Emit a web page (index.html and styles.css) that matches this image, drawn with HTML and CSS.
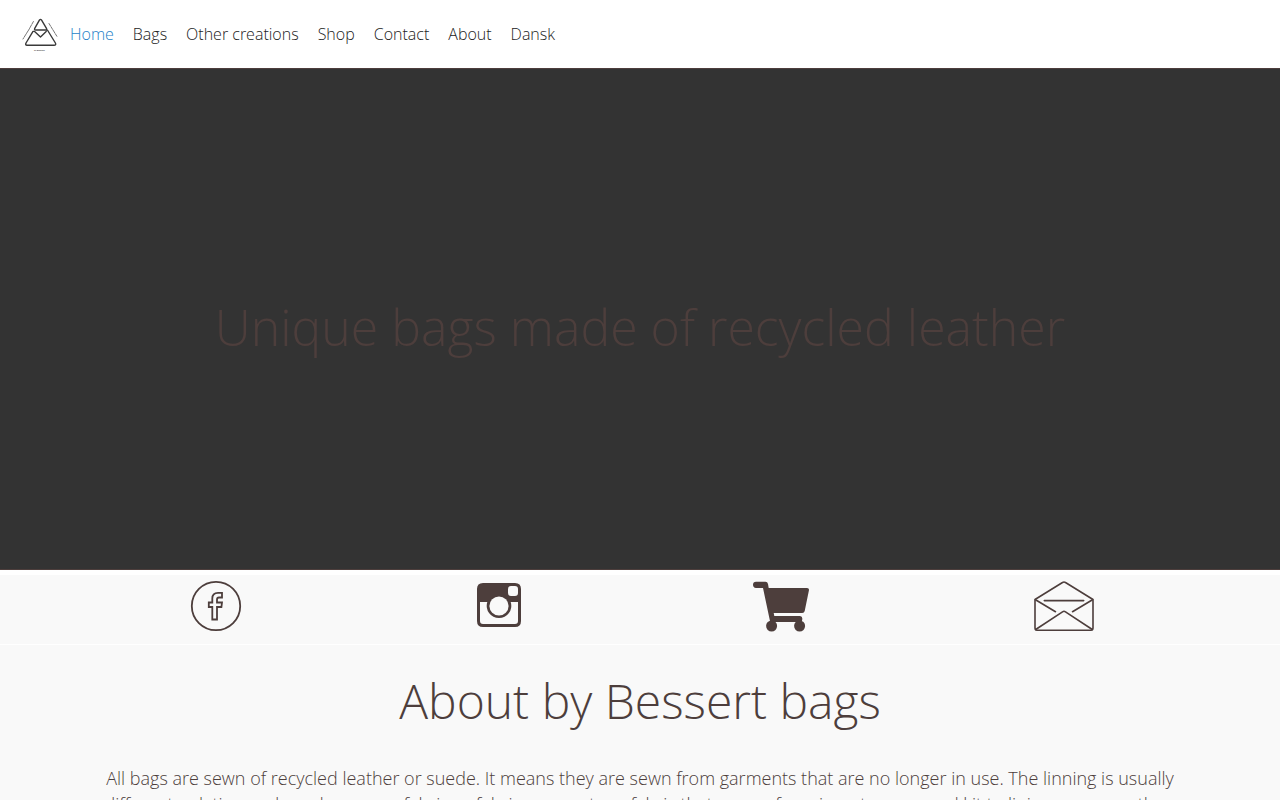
FILE: index.html
```html
<!DOCTYPE html>
<html lang="en">
<head>
    <meta charset="UTF-8">
    <meta name="viewport" content="width=device-width, initial-scale=1.0">
    <title>by Bessert</title>
    <link rel="stylesheet" href="styles.css">
</head>
<body>
    <header class="navbar">
        <a class="logo" href="#" aria-label="by Bessert">
            <svg viewBox="0 0 50 46" width="50" height="46" fill="none" stroke="#3a3a3a" stroke-width="1.4" stroke-linejoin="round" stroke-linecap="round">
                <path d="M23.4 8.2Q24.5 6.5 25.6 8.2L30.6 16.6M18.6 16.6L23.4 8.2M18.6 16.6Q18.2 18 19.6 18H31.4L39.4 31Q40.5 33.2 38 33.2H11Q9 33.2 10 31L17 19.4H18.6L24.5 25L30.2 19.6"/>
                <g stroke="#777" stroke-width="1" stroke-dasharray="3 1">
                    <path d="M17.4 9.5L12.4 18.5M12 19L7 27"/>
                    <path d="M33 11.5L41 24.5"/>
                </g>
                <text class="logo-text" x="18" y="39">by BESSERT</text>
            </svg>
        </a>
        <nav>
            <ul class="menu">
                <li><a class="active" href="#">Home</a></li>
                <li><a href="#">Bags</a></li>
                <li><a href="#">Other creations</a></li>
                <li><a href="#">Shop</a></li>
                <li><a href="#">Contact</a></li>
                <li><a href="#">About</a></li>
                <li><a href="#">Dansk</a></li>
            </ul>
        </nav>
    </header>

    <section class="hero">
        <h1>Unique bags made of recycled leather</h1>
    </section>

    <section class="links">
        <a href="#" aria-label="Facebook">
            <svg viewBox="0 0 60 60" width="60" height="60" fill="none" stroke="#4d3e3c" stroke-width="1.8">
                <circle cx="30" cy="30" r="24.2"/>
                <path d="M26.3 43.5V31H22.8V26.5H26.3V22.5Q26.3 16.8 32 16.8H36V21.5H33Q31 21.5 31 23.5V26.5H36L35.4 31H31V43.5Z"/>
            </svg>
        </a>
        <a href="#" aria-label="Instagram">
            <svg viewBox="0 0 60 60" width="60" height="60">
                <path fill="#4d3e3c" fill-rule="evenodd" d="M14 7H46Q52 7 52 13V45Q52 51 46 51H14Q8 51 8 45V13Q8 7 14 7ZM11 26V45Q11 48 14 48H46Q49 48 49 45V26H41.7A12.3 12.3 0 1 1 18.3 26ZM42 10Q39 10 39 13V17Q39 20 42 20H46Q49 20 49 17V13Q49 10 46 10Z"/>
                <circle cx="30" cy="30" r="9.6" fill="#f9f9f9"/>
            </svg>
        </a>
        <a href="#" aria-label="Shop">
            <svg viewBox="0 0 60 60" width="60" height="60" fill="#4d3e3c">
                <path d="M5 5.7H14.5Q16.5 5.7 17 8L17.7 12H56Q58.2 12 58 14L53.7 35Q53.2 37 51.2 37H22.7L23.3 40H49Q51.5 40 51.3 43Q51.3 46 49 46H19.2L12 12H5Q2 11.8 2 8.8Q2 5.7 5 5.7Z"/>
                <circle cx="20.6" cy="50" r="5.5"/>
                <circle cx="48.6" cy="50" r="5.5"/>
            </svg>
        </a>
        <a href="#" aria-label="Contact">
            <svg viewBox="0 0 60 60" width="60" height="60" fill="none" stroke="#4d3e3c" stroke-width="1.6" stroke-linejoin="round" stroke-linecap="round">
                <path d="M1 23.5L28.5 6.5Q30 5.4 31.5 6.5L59 23.5V52Q59 54.2 57 54.2H3Q1 54.2 1 52Z"/>
                <path d="M1.5 23.7L21.5 35.7M58.5 23.7L38.5 35.7M10.3 24.6H49.7M1.7 53.5L28.5 35.8Q30 34.8 31.5 35.8L58.3 53.5"/>
            </svg>
        </a>
    </section>

    <main class="about">
        <h2>About by Bessert bags</h2>
        <p>All bags are sewn of recycled leather or suede. It means they are sewn from garments that are no longer in use. The linning is usually different, relation and used on some fabric or fabric remnants or fabric that comes from investors or used kit to lining or some other.</p>
    </main>
</body>
</html>
```
FILE: styles.css
```css
* {
    box-sizing: border-box;
}
body {
    margin: 0;
    font-family: "Open Sans", sans-serif;
    font-weight: 300;
    color: #4d3e3c;
    background-color: #f9f9f9;
}
.navbar {
    display: flex;
    align-items: center;
    height: 68px;
    padding-left: 16px;
    background-color: #fff;
}
.logo {
    display: flex;
    padding-top: 2px;
}
.logo-text {
    font-size: 2px;
    font-weight: 600;
    fill: #333;
    stroke: none;
}
.menu {
    display: flex;
    gap: 19px;
    margin: 0;
    padding: 0 0 0 4px;
    list-style: none;
    font-size: 16px;
    line-height: 24px;
}
.menu a {
    color: #222;
    text-decoration: none;
}
.menu a.active {
    color: #1e7fc8;
}
.hero {
    display: flex;
    align-items: center;
    justify-content: center;
    height: 502px;
    padding-top: 16px;
    background-color: #333;
    border-top: 1px solid #4d3e3c;
    border-bottom: 1px solid #4d3e3c;
    text-align: center;
}
.hero h1 {
    margin: 0;
    font-size: 50px;
    font-weight: 300;
    line-height: 56px;
}
.links {
    display: grid;
    grid-template-columns: repeat(4, 1fr);
    padding: 1px 75px 0;
    border-top: 5px solid #fff;
    border-bottom: 1px solid #fff;
}
.links a {
    display: flex;
    justify-content: center;
    height: 68px;
}
.about {
    padding: 0 90px;
    text-align: center;
}
.about h2 {
    margin: 27px 0 35px;
    font-size: 48px;
    font-weight: 300;
    line-height: 58px;
}
.about p {
    margin: 0;
    font-size: 18px;
    line-height: 26px;
}
```
